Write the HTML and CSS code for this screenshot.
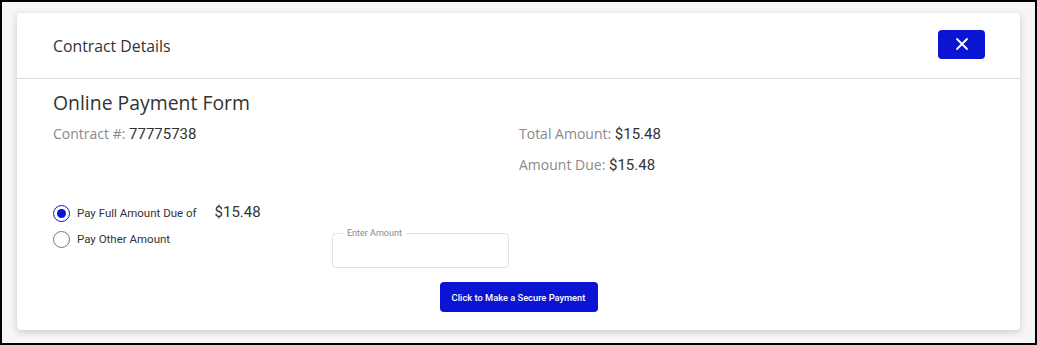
FILE: index.html
```html
<!DOCTYPE html>
<html lang="en">
<head>
    <title>Contract Details</title>
    <link rel="stylesheet" href="styles.css">
</head>
<body>
<div class="frame">
    <div class="card">
        <div class="card-header">
            <h1 class="card-title">Contract Details</h1>
            <button class="close-btn" aria-label="Close">
                <svg width="14" height="14" viewBox="0 0 14 14">
                    <path d="M2 2L12 12M12 2L2 12" stroke="#fff" stroke-width="1.8" stroke-linecap="round"/>
                </svg>
            </button>
        </div>
        <div class="card-body">
            <h2 class="form-title">Online Payment Form</h2>
            <div class="info">
                <div class="info-item"><span class="info-label">Contract #:</span> <span class="info-value">77775738</span></div>
                <div class="info-item"><span class="info-label">Total Amount:</span> <span class="info-value">$15.48</span></div>
                <div class="info-item"></div>
                <div class="info-item"><span class="info-label">Amount Due:</span> <span class="info-value">$15.48</span></div>
            </div>
            <div class="options">
                <div class="radios">
                    <label class="radio-row">
                        <span class="radio checked"></span>
                        <span class="radio-text">Pay Full Amount Due of</span>
                        <span class="radio-amount">$15.48</span>
                    </label>
                    <label class="radio-row">
                        <span class="radio"></span>
                        <span class="radio-text">Pay Other Amount</span>
                    </label>
                </div>
                <fieldset class="amount-field">
                    <legend>Enter Amount</legend>
                    <input type="text" class="amount-input">
                </fieldset>
            </div>
            <div class="actions">
                <button class="pay-btn">Click to Make a Secure Payment</button>
            </div>
        </div>
    </div>
</div>
</body>
</html>
```

FILE: styles.css
```css
* {
  box-sizing: border-box;
}
body {
  margin: 0;
  font-family: "Open Sans", Arial, sans-serif;
  color: #333;
}
.frame {
  width: 1037px;
  height: 345px;
  border: 2px solid #000;
  background-color: #f6f6f6;
  padding: 11px 15px 13px 15px;
}
.card {
  width: 1003px;
  height: 317px;
  background-color: #fff;
  border-radius: 4px;
  box-shadow: 0 2px 7px rgba(0, 0, 0, 0.18);
}
.card-header {
  height: 66px;
  display: flex;
  align-items: center;
  justify-content: space-between;
  padding: 0 35px 0 36px;
  border-bottom: 1px solid #dcdcdc;
}
.card-title {
  margin: 0;
  font-size: 15.8px;
  font-weight: 400;
  color: #333;
}
.close-btn {
  width: 47px;
  height: 29px;
  margin-top: -3px;
  border: none;
  border-radius: 4px;
  background-color: #0b14d2;
  display: flex;
  align-items: center;
  justify-content: center;
  padding: 0;
}
.card-body {
  padding: 12px 36px 0 36px;
}
.form-title {
  margin: 0;
  font-size: 19.4px;
  line-height: 24px;
  font-weight: 400;
  color: #333;
}
.info {
  display: grid;
  grid-template-columns: 466px 1fr;
  row-gap: 11px;
  margin-top: 9px;
}
.info-item {
  font-size: 14px;
  line-height: 20px;
  height: 20px;
}
.info-label {
  color: #8a8a8a;
}
.info-value {
  font-family: Roboto, Arial, sans-serif;
  font-size: 15px;
  color: #333;
}
.options {
  display: flex;
  margin-top: 25px;
}
.radios {
  width: 279px;
}
.radio-row {
  display: flex;
  align-items: center;
  height: 26px;
  font-family: Roboto, Arial, sans-serif;
}
.radio {
  width: 17px;
  height: 17px;
  border: 1.5px solid #777;
  border-radius: 50%;
  display: flex;
  align-items: center;
  justify-content: center;
  margin-right: 7px;
}
.radio.checked {
  border-color: #0b14d2;
}
.radio.checked::after {
  content: "";
  width: 9px;
  height: 9px;
  border-radius: 50%;
  background-color: #0b14d2;
}
.radio-text {
  font-size: 11.5px;
  color: #333;
}
.radio-amount {
  font-size: 15px;
  color: #333;
  margin-left: 18px;
  margin-top: -2px;
}
.amount-field {
  width: 177px;
  height: 40px;
  margin: 28px 0 0 0;
  padding: 0 10px;
  border: 1px solid #e2e2e2;
  border-radius: 4px;
}
.amount-field legend {
  font-family: Roboto, Arial, sans-serif;
  font-size: 9px;
  line-height: 11px;
  color: #888;
  padding: 0 4px;
}
.amount-input {
  width: 100%;
  border: none;
  outline: none;
  height: 22px;
  font-family: Roboto, Arial, sans-serif;
}
.actions {
  display: flex;
  justify-content: center;
  margin-top: 14px;
}
.pay-btn {
  width: 158px;
  height: 30px;
  border: none;
  border-radius: 4px;
  background-color: #0b14d2;
  color: #fff;
  font-family: Roboto, Arial, sans-serif;
  font-size: 9.3px;
  font-weight: 500;
}
```
